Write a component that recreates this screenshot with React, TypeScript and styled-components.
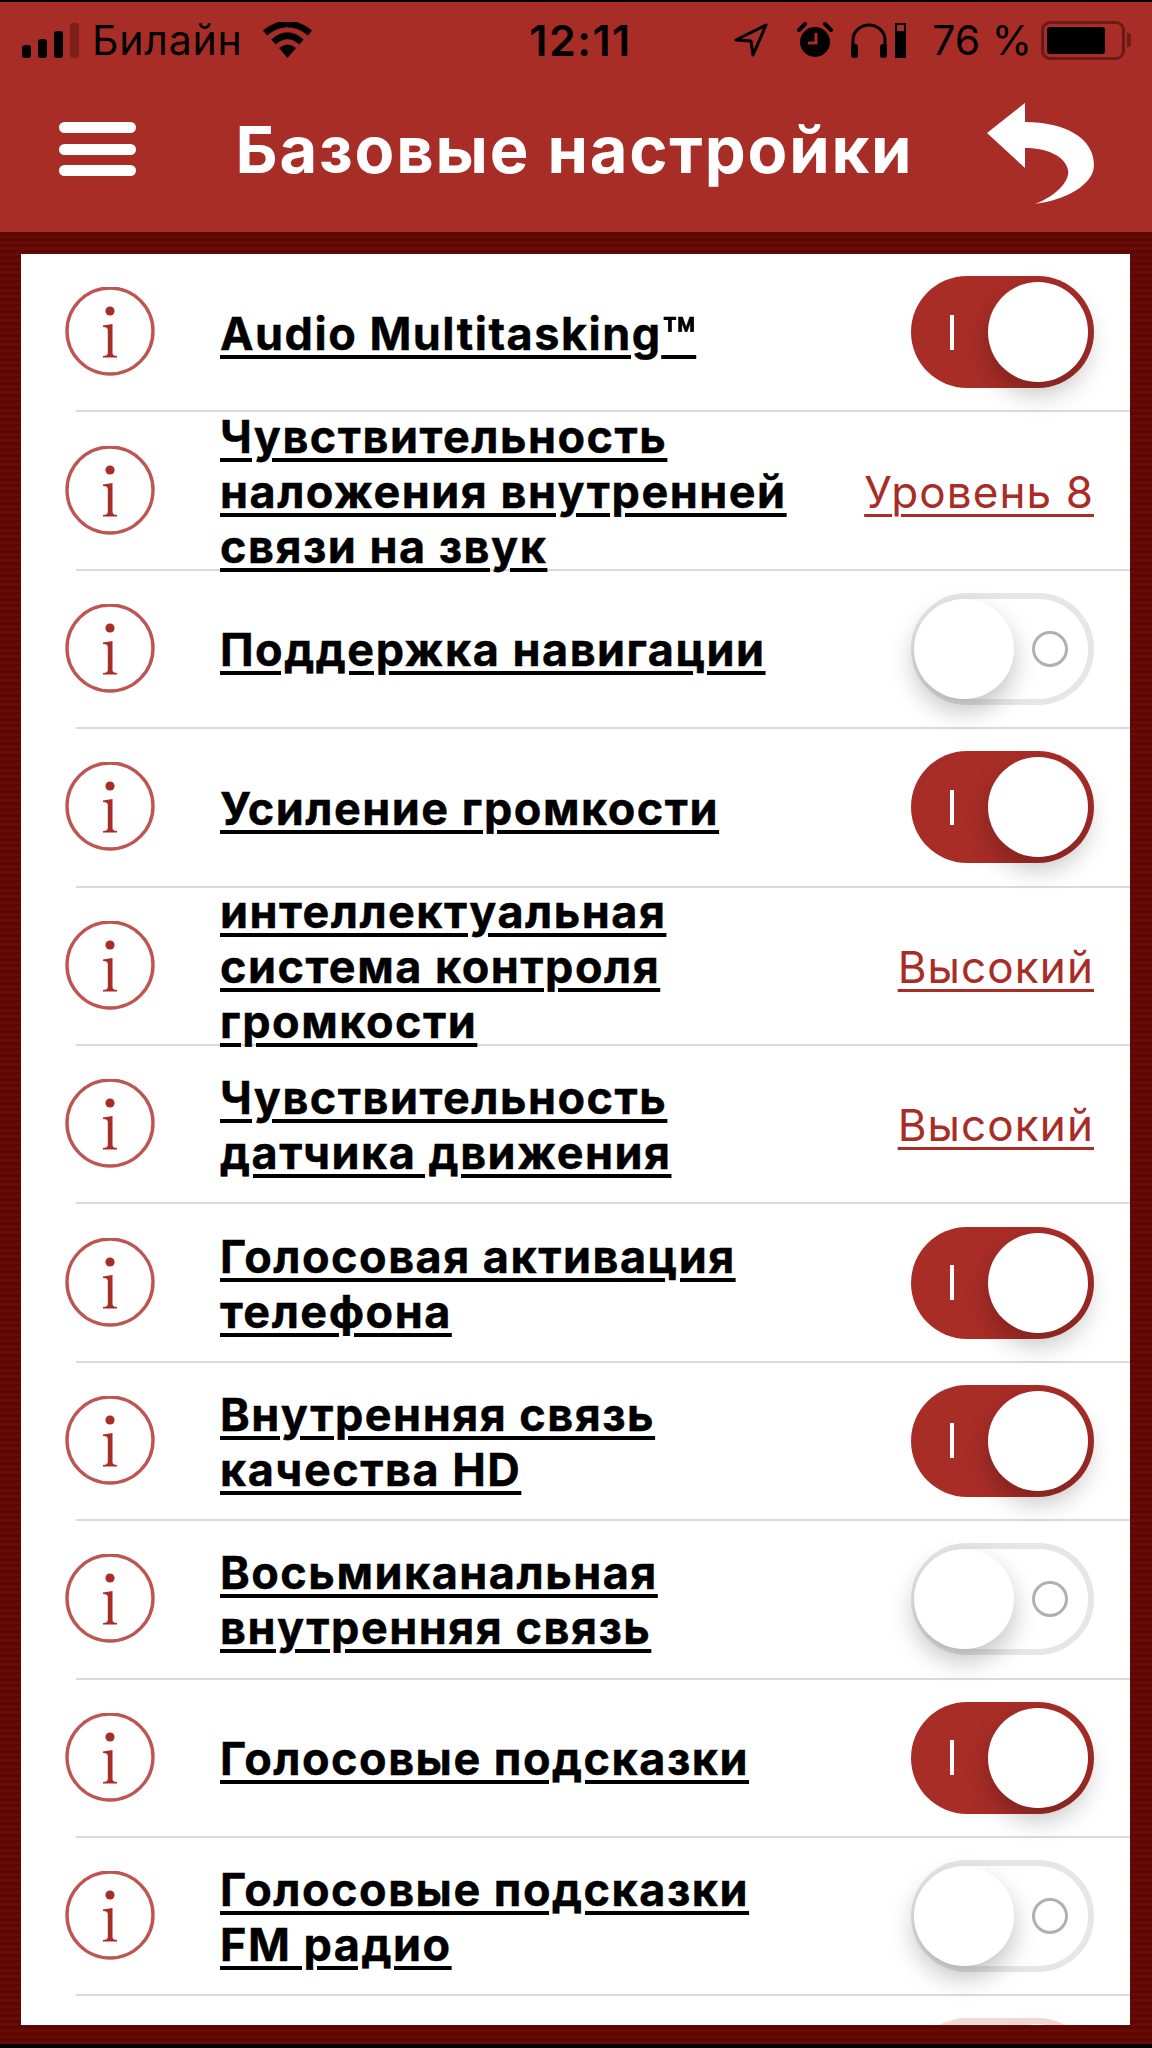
import styled, { createGlobalStyle } from 'styled-components';

const RED = '#a92d27';

const GlobalStyle = createGlobalStyle`
  html, body {
    margin: 0;
    padding: 0;
    background: #000;
  }
  * {
    box-sizing: border-box;
  }
`;

type RowData = {
  label: string[];
  value?: string;
  on?: boolean;
};

const rows: RowData[] = [
  { label: ['Audio Multitasking'], on: true },
  { label: ['Чувствительность', 'наложения внутренней', 'связи на звук'], value: 'Уровень 8' },
  { label: ['Поддержка навигации'], on: false },
  { label: ['Усиление громкости'], on: true },
  { label: ['интеллектуальная', 'система контроля', 'громкости'], value: 'Высокий' },
  { label: ['Чувствительность', 'датчика движения'], value: 'Высокий' },
  { label: ['Голосовая активация', 'телефона'], on: true },
  { label: ['Внутренняя связь', 'качества HD'], on: true },
  { label: ['Восьмиканальная', 'внутренняя связь'], on: false },
  { label: ['Голосовые подсказки'], on: true },
  { label: ['Голосовые подсказки', 'FM радио'], on: false },
];

const signal = [13, 19, 27, 35];

const InfoIcon = () => (
  <InfoSvg viewBox="0 0 90 90">
    <circle cx="45" cy="44" r="43" fill="none" stroke="#bf5550" strokeWidth="3.4" />
    <circle cx="45" cy="24" r="4.6" fill={RED} />
    <path
      d="M38 38.5 L47.5 37 V66 Q47.5 69 52 69 V70.5 H38 V69 Q42.8 69 42.8 66 V43 Q42.8 40 38 40 Z"
      fill={RED}
    />
  </InfoSvg>
);

const Toggle = ({ on }: { on: boolean }) => (
  <Track $on={on}>
    {on && <OnMark />}
    <Knob $on={on} />
    {!on && <OffMark />}
  </Track>
);

const App = () => {
  return (
    <>
      <GlobalStyle />
      <Screen>
        <Header>
          <StatusBar>
            <StatusLeft>
              <SignalBars>
                {signal.map((h, i) => (
                  <SignalBar key={h} $h={h} $dim={i === 3} />
                ))}
              </SignalBars>
              <Carrier>Билайн</Carrier>
              <svg width="51" height="36" viewBox="0 0 51 36">
                <path d="M25.5 36 L17 26 Q25.5 19 34 26 Z" fill="#000" />
                <path d="M11.5 20 Q25.5 7.5 39.5 20" fill="none" stroke="#000" strokeWidth="6.5" />
                <path d="M3 11 Q25.5 -7 48 11" fill="none" stroke="#000" strokeWidth="6.5" />
              </svg>
            </StatusLeft>
            <Clock>12:11</Clock>
            <StatusRight>
              <LocationSvg width="34" height="34" viewBox="0 0 34 34">
                <path
                  d="M32 2 L2 17 L17 18 L19 32 Z"
                  fill="none"
                  stroke="#000"
                  strokeWidth="3"
                  strokeLinejoin="round"
                />
              </LocationSvg>
              <svg width="36" height="36" viewBox="0 0 36 36">
                <circle cx="18" cy="20" r="15" fill="#000" />
                <path d="M19 11 V21 H11" fill="none" stroke={RED} strokeWidth="3" />
                <path d="M2 8 L8 2 M34 8 L28 2" stroke="#000" strokeWidth="4" strokeLinecap="round" />
              </svg>
              <Headset>
                <svg width="40" height="36" viewBox="0 0 40 36">
                  <path d="M4 30 V18 a16 15 0 0 1 32 0 V30" fill="none" stroke="#000" strokeWidth="3" />
                  <rect x="2" y="22" width="7" height="14" rx="3" fill="#000" />
                  <rect x="31" y="22" width="7" height="14" rx="3" fill="#000" />
                </svg>
                <MiniBattery />
              </Headset>
              <Percent>76 %</Percent>
              <BatteryGroup>
                <Battery>
                  <BatteryFill />
                </Battery>
                <BatteryNub />
              </BatteryGroup>
            </StatusRight>
          </StatusBar>
          <NavBar>
            <MenuIcon>
              <span />
              <span />
              <span />
            </MenuIcon>
            <Title>Базовые настройки</Title>
            <svg width="108" height="103" viewBox="986 102 108 103">
              <path
                d="M987 133 L1025 103 V122 C1065 122 1094 138 1094 165 C1094 185 1065 200 1035 204 C1058 195 1070 180 1068 170 C1065 155 1045 148 1025 148 V168 Z"
                fill="#fff"
              />
            </svg>
          </NavBar>
        </Header>
        <Backdrop>
          <Panel>
            {rows.map((row) => (
              <Row key={row.label.join(' ')}>
                <InfoIcon />
                <Label>
                  {row.label.map((line) => (
                    <LabelLine key={line}>
                      {line}
                      {line.startsWith('Audio') && <Trademark>™</Trademark>}
                    </LabelLine>
                  ))}
                </Label>
                {row.value ? <Value>{row.value}</Value> : <Toggle on={!!row.on} />}
              </Row>
            ))}
            <Row>
              <Spacer />
              <Faded>
                <Toggle on />
              </Faded>
            </Row>
          </Panel>
        </Backdrop>
      </Screen>
    </>
  );
};

export default App;

const Screen = styled.div`
  width: 1152px;
  height: 2048px;
  display: flex;
  flex-direction: column;
  padding: 2px 0 4px;
  overflow: hidden;
  background: #000;
  font-family: Inter, 'Noto Sans', sans-serif;
`;

const Header = styled.header`
  height: 230px;
  flex: none;
  background: ${RED};
  display: flex;
  flex-direction: column;
`;

const StatusBar = styled.div`
  height: 76px;
  display: grid;
  grid-template-columns: 1fr auto 1fr;
  align-items: center;
  padding: 0 19px 0 22px;
  color: #000;
`;

const StatusLeft = styled.div`
  display: flex;
  align-items: center;
  gap: 13px;
`;

const SignalBars = styled.div`
  display: flex;
  align-items: flex-end;
  gap: 7px;
  height: 36px;
`;

const SignalBar = styled.div<{ $h: number; $dim: boolean }>`
  width: 9px;
  height: ${(p) => p.$h}px;
  border-radius: 3px;
  background: ${(p) => (p.$dim ? '#7f1f1a' : '#000')};
`;

const Carrier = styled.span`
  font-size: 41px;
  letter-spacing: 0.8px;
  margin-right: 6px;
`;

const Clock = styled.span`
  font-size: 43px;
  font-weight: 600;
  letter-spacing: 1.5px;
  margin-left: 6px;
`;

const StatusRight = styled.div`
  display: flex;
  align-items: center;
  justify-content: flex-end;
  gap: 20px;
`;

const LocationSvg = styled.svg`
  margin-right: 9px;
`;

const Headset = styled.div`
  display: flex;
  align-items: center;
  gap: 6px;
  margin-left: -4px;
`;

const MiniBattery = styled.div`
  width: 11px;
  height: 35px;
  border: 2px solid #000;
  background: linear-gradient(#a92d27 20%, #000 20%);
`;

const Percent = styled.span`
  font-size: 41px;
  margin-left: 6px;
`;

const BatteryGroup = styled.div`
  display: flex;
  align-items: center;
  gap: 2px;
  margin-left: -11px;
  margin-right: 2px;
`;

const Battery = styled.div`
  width: 84px;
  height: 39px;
  border: 3px solid #6d1a16;
  border-radius: 9px;
  padding: 3px;
`;

const BatteryFill = styled.div`
  width: 58px;
  height: 100%;
  background: #000;
  border-radius: 3px;
`;

const BatteryNub = styled.div`
  width: 4px;
  height: 14px;
  background: #6d1a16;
  border-radius: 0 3px 3px 0;
`;

const NavBar = styled.div`
  flex: 1;
  display: flex;
  align-items: flex-start;
  padding: 24px 58px 0 59px;
  justify-content: space-between;
`;

const MenuIcon = styled.div`
  width: 77px;
  height: 54px;
  margin-top: 20px;
  display: flex;
  flex-direction: column;
  justify-content: space-between;

  span {
    height: 11px;
    border-radius: 6px;
    background: #fff;
  }
`;

const Title = styled.h1`
  margin: 13px 0 0 27px;
  color: #fff;
  font-size: 65px;
  line-height: 70px;
  font-weight: 700;
  letter-spacing: 1.8px;
  white-space: nowrap;
`;

const Backdrop = styled.div`
  flex: 1;
  min-height: 0;
  display: flex;
  padding: 22px 22px 19px 21px;
  background: repeating-linear-gradient(#5c0703 0 3px, #680a05 3px 6px);
`;

const Panel = styled.main`
  flex: 1;
  background: #fff;
  overflow: hidden;
`;

const Row = styled.div`
  height: 158.4px;
  margin-left: 55px;
  padding-right: 36px;
  border-bottom: 2px solid #d9d9de;
  display: flex;
  align-items: center;
`;

const InfoSvg = styled.svg`
  width: 90px;
  height: 90px;
  flex: none;
  margin-left: -11px;
  margin-right: 65px;
`;

const Spacer = styled.div`
  flex: 1;
`;

const Faded = styled.div`
  opacity: 0.18;
`;

const Label = styled.div`
  flex: 1;
  min-width: 0;
  padding-top: 2px;
  color: #000;
  font-size: 45px;
  line-height: 55px;
  font-weight: 700;
  letter-spacing: 1.5px;
  -webkit-text-stroke: 0.4px #000;
`;

const LabelLine = styled.div`
  white-space: nowrap;
  text-decoration: underline;
  text-decoration-thickness: 4px;
  text-underline-offset: 5px;
`;

const Trademark = styled.span`
  font-size: 1.2em;
  line-height: 0;
  letter-spacing: 0;
  vertical-align: -0.12em;
`;

const Value = styled.span`
  padding-top: 2px;
  color: ${RED};
  font-size: 44px;
  letter-spacing: 1.1px;
  text-decoration: underline;
  text-decoration-thickness: 3px;
  text-underline-offset: 6px;
  white-space: nowrap;
`;

const Track = styled.div<{ $on: boolean }>`
  width: 183px;
  height: 112px;
  flex: none;
  border-radius: 56px;
  display: flex;
  align-items: center;
  justify-content: ${(p) => (p.$on ? 'flex-end' : 'flex-start')};
  background: ${(p) => (p.$on ? RED : '#fff')};
  border: ${(p) => (p.$on ? 'none' : '6px solid #e6e6e6')};
  padding: ${(p) => (p.$on ? '6px' : '0')};
`;

const Knob = styled.div<{ $on: boolean }>`
  width: 100px;
  height: 100px;
  flex: none;
  border-radius: 50%;
  background: #fff;
  box-shadow: 0 12px 26px rgba(0, 0, 0, 0.24);
  margin-left: ${(p) => (p.$on ? '0' : '-3px')};
`;

const OnMark = styled.div`
  width: 4px;
  height: 35px;
  margin-right: 34px;
  background: #fff;
`;

const OffMark = styled.div`
  width: 36px;
  height: 36px;
  margin-left: 18px;
  border-radius: 50%;
  border: 3px solid #b0b0b0;
`;
